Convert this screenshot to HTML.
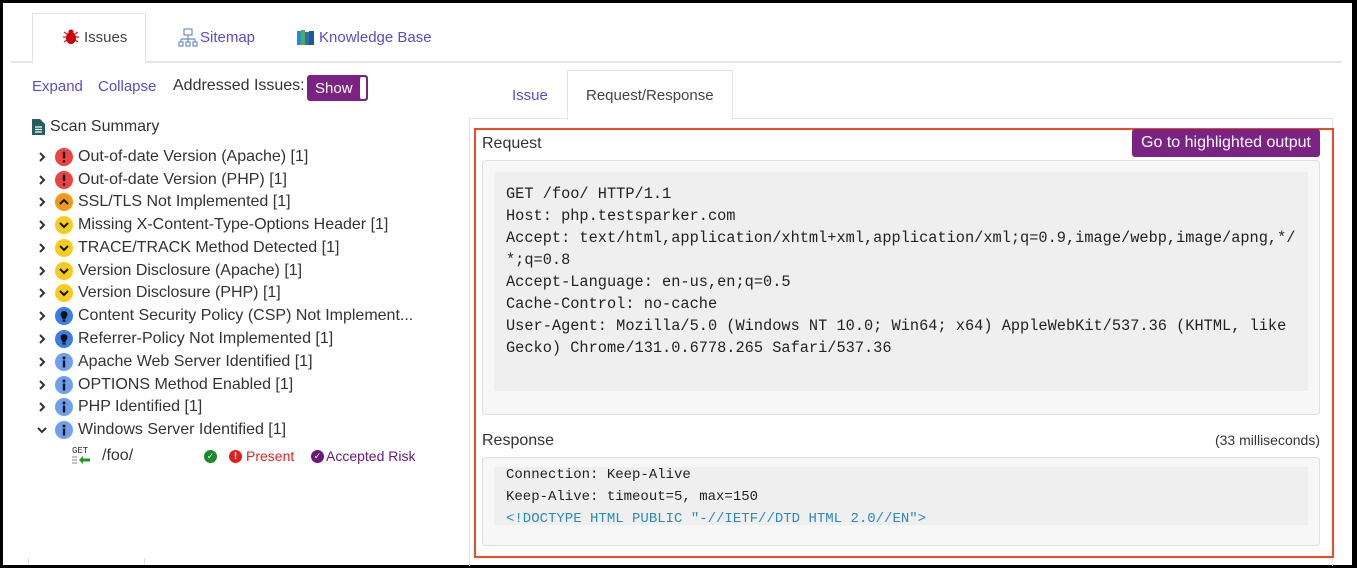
<!DOCTYPE html>
<html><head><meta charset="utf-8"><style>
*{margin:0;padding:0;box-sizing:border-box}
body{width:1357px;height:568px;background:#000;position:relative;overflow:hidden;font-family:"Liberation Sans",sans-serif;color:#333}
#pg{position:absolute;left:3px;top:3px;width:1349px;height:562px;background:#fff}
.a{position:absolute;white-space:nowrap}
.row{position:absolute;left:33px;height:22px;font-size:16px;color:#333;display:flex;align-items:center;white-space:nowrap}
.row svg{margin-right:5px;flex:none}
.row svg.cv{margin-right:7px}
.mono{font-family:"Liberation Mono",monospace;font-size:15.3px;line-height:22px;color:#222}
</style></head><body><div id="pg">
<svg width="0" height="0" style="position:absolute"><defs>
<symbol id="cr" viewBox="0 0 12 12"><path d="M4 2l4 4-4 4" fill="none" stroke="#333" stroke-width="2"/></symbol>
<symbol id="cd" viewBox="0 0 12 12"><path d="M2 4l4 4 4-4" fill="none" stroke="#333" stroke-width="2"/></symbol>
<symbol id="er" viewBox="0 0 18 18"><circle cx="9" cy="9" r="9" fill="#ec4343"/><rect x="7.8" y="3.5" width="2.4" height="7" rx="1" fill="#111"/><circle cx="9" cy="13.3" r="1.3" fill="#111"/></symbol>
<symbol id="up" viewBox="0 0 18 18"><circle cx="9" cy="9" r="9" fill="#f29a12"/><path d="M5 11l4-4 4 4" fill="none" stroke="#111" stroke-width="2"/></symbol>
<symbol id="dn" viewBox="0 0 18 18"><circle cx="9" cy="9" r="9" fill="#f8cc1a"/><path d="M5 7l4 4 4-4" fill="none" stroke="#111" stroke-width="2"/></symbol>
<symbol id="bl" viewBox="0 0 18 18"><circle cx="9" cy="9" r="9" fill="#3a7fe8"/><path d="M9 4a3.5 3.5 0 0 1 3.5 3.5c0 2-2 3-2 5h-3c0-2-2-3-2-5A3.5 3.5 0 0 1 9 4z" fill="#111"/><rect x="7.5" y="13" width="3" height="1.6" fill="#111"/></symbol>
<symbol id="in" viewBox="0 0 18 18"><circle cx="9" cy="9" r="9" fill="#6fa0f0"/><circle cx="9" cy="5" r="1.5" fill="#111"/><rect x="7.8" y="7.5" width="2.4" height="7" fill="#111"/></symbol>
</defs></svg>
<!-- top tabs -->
<div class="a" style="left:8px;top:58px;width:1331px;height:2px;background:#e6e6e6"></div>
<div class="a" style="left:29px;top:10px;width:114px;height:50px;border:1px solid #e3e3e3;border-bottom:none;background:#fff"></div>
<svg class="a" style="left:59px;top:25px" width="18" height="18" viewBox="0 0 18 18"><g stroke="#d22" stroke-width="1.3"><line x1="2" y1="4" x2="16" y2="14"/><line x1="16" y1="4" x2="2" y2="14"/><line x1="1" y1="9" x2="17" y2="9"/></g><ellipse cx="9" cy="10" rx="5" ry="6" fill="#c00"/><circle cx="9" cy="4" r="2.5" fill="#c00"/></svg>
<div class="a" style="left:81px;top:26px;color:#444;font-size:15px">Issues</div>
<svg class="a" style="left:175px;top:25px" width="20" height="20" viewBox="0 0 20 20" fill="none" stroke="#6a8fc8" stroke-width="1.2"><rect x="6" y="1" width="8" height="6"/><path d="M10 7v4M3 11h14M3 11v3M10 11v3M17 11v3"/><rect x="1" y="14" width="4" height="4"/><rect x="8" y="14" width="4" height="4"/><rect x="15" y="14" width="4" height="4"/></svg>
<div class="a" style="left:197px;top:26px;color:#5b4bd1;font-size:15px">Sitemap</div>
<svg class="a" style="left:293px;top:25px" width="20" height="18" viewBox="0 0 20 18"><rect x="1" y="3" width="4" height="14" fill="#1e8fcf"/><rect x="5" y="2" width="4" height="15" fill="#5aa850"/><rect x="9" y="4" width="4" height="13" fill="#2a6fb0"/><rect x="13" y="3" width="5" height="14" fill="#1c5a94"/></svg>
<div class="a" style="left:316px;top:26px;color:#5b4bd1;font-size:15px">Knowledge Base</div>

<!-- toolbar -->
<div class="a" style="left:29px;top:75px;font-size:15px;color:#5b4bd1">Expand</div>
<div class="a" style="left:95px;top:75px;font-size:15px;color:#5b4bd1">Collapse</div>
<div class="a" style="left:170px;top:74px;font-size:16px;color:#333">Addressed Issues:</div>
<div class="a" style="left:304px;top:72px;width:61px;height:26px;background:#7b2383;border:1px solid #7b2383;border-radius:3px;color:#fff;font-size:15px;padding:4px 0 0 7px">Show<div class="a" style="right:1px;top:1px;width:6px;height:22px;background:#fff;border-radius:2px"></div></div>

<svg class="a" style="left:29px;top:116px" width="13" height="16" viewBox="0 0 13 16"><path d="M0 0h8l5 5v11H0z" fill="#245e5e"/><path d="M3 8h7M3 10.5h7M3 13h7" stroke="#fff" stroke-width="1.2"/></svg>
<div class="a" style="left:47px;top:115px;font-size:16px;color:#333">Scan Summary</div>

<div class="row" style="top:143px"><svg class="cv" width="12" height="12"><use href="#cr"/></svg><svg width="18" height="18"><use href="#er"/></svg>Out-of-date Version (Apache) [1]</div>
<div class="row" style="top:166px"><svg class="cv" width="12" height="12"><use href="#cr"/></svg><svg width="18" height="18"><use href="#er"/></svg>Out-of-date Version (PHP) [1]</div>
<div class="row" style="top:188px"><svg class="cv" width="12" height="12"><use href="#cr"/></svg><svg width="18" height="18"><use href="#up"/></svg>SSL/TLS Not Implemented [1]</div>
<div class="row" style="top:211px"><svg class="cv" width="12" height="12"><use href="#cr"/></svg><svg width="18" height="18"><use href="#dn"/></svg>Missing X-Content-Type-Options Header [1]</div>
<div class="row" style="top:234px"><svg class="cv" width="12" height="12"><use href="#cr"/></svg><svg width="18" height="18"><use href="#dn"/></svg>TRACE/TRACK Method Detected [1]</div>
<div class="row" style="top:257px"><svg class="cv" width="12" height="12"><use href="#cr"/></svg><svg width="18" height="18"><use href="#dn"/></svg>Version Disclosure (Apache) [1]</div>
<div class="row" style="top:279px"><svg class="cv" width="12" height="12"><use href="#cr"/></svg><svg width="18" height="18"><use href="#dn"/></svg>Version Disclosure (PHP) [1]</div>
<div class="row" style="top:302px"><svg class="cv" width="12" height="12"><use href="#cr"/></svg><svg width="18" height="18"><use href="#bl"/></svg>Content Security Policy (CSP) Not Implement...</div>
<div class="row" style="top:325px"><svg class="cv" width="12" height="12"><use href="#cr"/></svg><svg width="18" height="18"><use href="#bl"/></svg>Referrer-Policy Not Implemented [1]</div>
<div class="row" style="top:348px"><svg class="cv" width="12" height="12"><use href="#cr"/></svg><svg width="18" height="18"><use href="#in"/></svg>Apache Web Server Identified [1]</div>
<div class="row" style="top:371px"><svg class="cv" width="12" height="12"><use href="#cr"/></svg><svg width="18" height="18"><use href="#in"/></svg>OPTIONS Method Enabled [1]</div>
<div class="row" style="top:393px"><svg class="cv" width="12" height="12"><use href="#cr"/></svg><svg width="18" height="18"><use href="#in"/></svg>PHP Identified [1]</div>
<div class="row" style="top:416px"><svg class="cv" width="12" height="12"><use href="#cd"/></svg><svg width="18" height="18"><use href="#in"/></svg>Windows Server Identified [1]</div>
<div class="a" style="left:69px;top:444px;font-family:'Liberation Mono',monospace;font-size:9px;line-height:9px;color:#333">GET</div>
<svg class="a" style="left:69px;top:452px" width="20" height="10" viewBox="0 0 20 10"><path d="M0 2h5M0 5h5M0 8h5" stroke="#888" stroke-width="1"/><path d="M7 5l4-4v2.5h7v3h-7V9z" fill="#1a9a1a"/></svg>
<div class="a" style="left:99px;top:444px;font-size:16px;color:#333">/foo/</div>
<div class="a" style="left:201px;top:447px;width:13px;height:13px;border-radius:50%;background:#1a8a2a;color:#fff;font-size:9px;text-align:center;line-height:13px">✓</div>
<div class="a" style="left:226px;top:447px;width:13px;height:13px;border-radius:50%;background:#e02020;color:#fff;font-size:10px;font-weight:bold;text-align:center;line-height:13px">!</div>
<div class="a" style="left:243px;top:445px;font-size:14px;color:#e02020">Present</div>
<div class="a" style="left:308px;top:447px;width:13px;height:13px;border-radius:50%;background:#6a1a7a;color:#fff;font-size:9px;text-align:center;line-height:13px">✓</div>
<div class="a" style="left:323px;top:445px;font-size:14px;color:#6a1a7a">Accepted Risk</div>

<!-- right panel -->
<div class="a" style="left:466px;top:115px;width:864px;height:448px;border:1px solid #e3e3e3;border-bottom:none"></div>
<div class="a" style="left:564px;top:67px;width:166px;height:50px;border:1px solid #e3e3e3;border-bottom:none;background:#fff"></div>
<div class="a" style="left:509px;top:84px;font-size:15px;color:#5b4bd1">Issue</div>
<div class="a" style="left:583px;top:84px;font-size:15px;color:#444">Request/Response</div>
<div class="a" style="left:471px;top:125px;width:860px;height:430px;border:2px solid #f04a24"></div>
<div class="a" style="left:479px;top:132px;font-size:16px;color:#333">Request</div>
<div class="a" style="left:1129px;top:126px;width:188px;height:28px;background:#7b2383;border-radius:3px;color:#fff;font-size:16px;text-align:center;line-height:28px">Go to highlighted output</div>
<div class="a" style="left:479px;top:157px;width:838px;height:255px;background:#f7f7f7;border:1px solid #e0e0e0;border-radius:4px"></div>
<div class="a" style="left:491px;top:169px;width:814px;height:219px;background:#efefef"></div>
<div class="a mono" style="left:503px;top:180px">GET /foo/ HTTP/1.1<br>Host: php.testsparker.com<br>Accept: text/html,application/xhtml+xml,application/xml;q=0.9,image/webp,image/apng,*/<br>*;q=0.8<br>Accept-Language: en-us,en;q=0.5<br>Cache-Control: no-cache<br>User-Agent: Mozilla/5.0 (Windows NT 10.0; Win64; x64) AppleWebKit/537.36 (KHTML, like<br>Gecko) Chrome/131.0.6778.265 Safari/537.36</div>
<div class="a" style="left:479px;top:429px;font-size:16px;color:#333">Response</div>
<div class="a" style="left:1177px;top:429px;font-size:14px;color:#333;width:140px;text-align:right">(33 milliseconds)</div>
<div class="a" style="left:479px;top:454px;width:838px;height:89px;background:#f7f7f7;border:1px solid #e0e0e0;border-radius:4px"></div>
<div class="a" style="left:491px;top:464px;width:814px;height:58px;background:#efefef;overflow:hidden"><div class="a mono" style="left:12px;top:-3px;font-size:14px">Connection: Keep-Alive<br>Keep-Alive: timeout=5, max=150<br><span style="color:#2a8ab8">&lt;!DOCTYPE HTML PUBLIC "-//IETF//DTD HTML 2.0//EN"&gt;</span></div></div>
<div class="a" style="left:25px;top:555px;width:1px;height:7px;background:#ddd"></div>
<div class="a" style="left:141px;top:555px;width:1px;height:7px;background:#ddd"></div>
</div></body></html>
